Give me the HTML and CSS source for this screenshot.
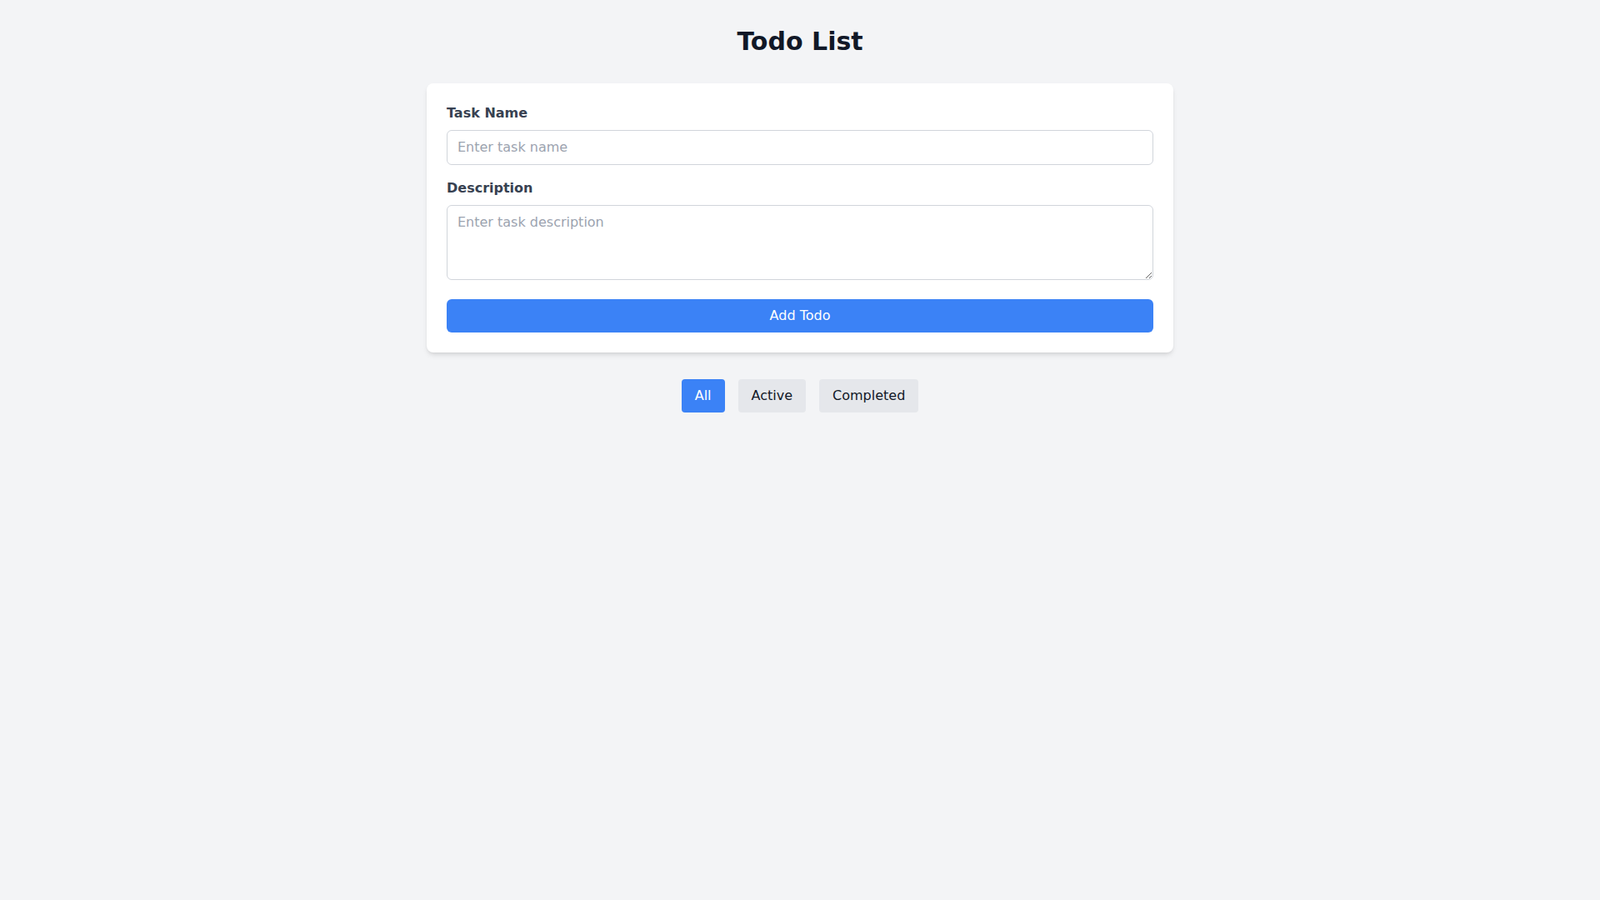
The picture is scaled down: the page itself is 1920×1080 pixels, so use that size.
FILE: index.html
```html
<!DOCTYPE html>
<html lang="en">
<head>
<meta charset="utf-8">
<title>Todo List</title>
<link rel="stylesheet" href="styles.css">
</head>
<body>
<div class="page">
  <h1 class="title">Todo List</h1>
  <form class="card" onsubmit="return false;">
    <div class="field">
      <label class="label" for="name">Task Name</label>
      <input id="name" class="input" type="text" placeholder="Enter task name">
    </div>
    <div class="field field-area">
      <label class="label" for="desc">Description</label>
      <textarea id="desc" class="input textarea" rows="3" placeholder="Enter task description"></textarea>
    </div>
    <button class="submit" type="submit">Add Todo</button>
  </form>
  <div class="filters">
    <button class="filter filter-active" type="button">All</button>
    <button class="filter" type="button">Active</button>
    <button class="filter" type="button">Completed</button>
  </div>
</div>
</body>
</html>
```
FILE: styles.css
```css
* { box-sizing: border-box; }
html, body { margin: 0; padding: 0; }
body {
  background: #f3f4f6;
  font-family: "DejaVu Sans", "Liberation Sans", sans-serif;
  font-size: 16px;
  line-height: 24px;
  color: #111827;
}
.page {
  padding: 32px;
}
.title {
  margin: 0 0 32px;
  text-align: center;
  font-size: 30px;
  line-height: 36px;
  font-weight: 700;
  color: #111827;
}
.card {
  display: block;
  max-width: 896px;
  margin: 0 auto;
  background: #ffffff;
  border-radius: 8px;
  padding: 24px;
  box-shadow: 0 4px 6px -1px rgba(0,0,0,0.1), 0 2px 4px -2px rgba(0,0,0,0.1);
}
.field {
  margin-bottom: 16px;
}
.field-area {
  margin-bottom: 23px;
}
.label {
  display: block;
  font-size: 16px;
  line-height: 24px;
  font-weight: 700;
  color: #374151;
  margin-bottom: 8px;
}
.input {
  display: block;
  width: 100%;
  margin: 0;
  padding: 8px 12px;
  border: 1px solid #d1d5db;
  border-radius: 6px;
  font-family: "DejaVu Sans", "Liberation Sans", sans-serif;
  font-size: 16px;
  line-height: 24px;
  color: #111827;
  background: #ffffff;
  outline: none;
}
.input::placeholder {
  color: #9ca3af;
}
.textarea {
  height: 90px;
  resize: vertical;
}
.submit {
  display: block;
  width: 100%;
  margin: 0;
  padding: 8px 16px;
  border: 0;
  border-radius: 6px;
  background: #3b82f6;
  color: #ffffff;
  font-family: "DejaVu Sans", "Liberation Sans", sans-serif;
  font-size: 16px;
  line-height: 24px;
  cursor: pointer;
}
.filters {
  display: flex;
  justify-content: center;
  gap: 16px;
  margin-top: 32px;
}
.filter {
  margin: 0;
  padding: 8px 16px;
  border: 0;
  border-radius: 4px;
  background: #e5e7eb;
  color: #111827;
  font-family: "DejaVu Sans", "Liberation Sans", sans-serif;
  font-size: 16px;
  line-height: 24px;
  cursor: pointer;
}
.filter-active {
  background: #3b82f6;
  color: #ffffff;
}
```
